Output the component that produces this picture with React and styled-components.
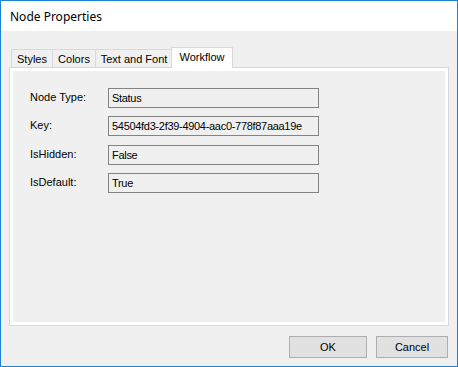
import React from "react";
import styled, { createGlobalStyle } from "styled-components";

const Global = createGlobalStyle`
  html, body { margin: 0; padding: 0; background: #ffffff; }
  * { box-sizing: border-box; }
`;

const Window = styled.div`
  width: 458px;
  height: 367px;
  border: 1px solid #1883d7;
  background: #f0f0f0;
  display: flex;
  flex-direction: column;
  font-family: "Liberation Sans", Arial, sans-serif;
  font-size: 11px;
  color: #000;
`;

const TitleBar = styled.div`
  height: 30px;
  background: #ffffff;
  display: flex;
  align-items: center;
  padding-left: 9px;
  font-family: "Noto Sans", "Liberation Sans", sans-serif;
  font-size: 12px;
  color: #000;
`;

const Body = styled.div`
  flex: 1;
  display: flex;
  flex-direction: column;
  padding: 16px 9px 0 8px;
`;

const TabRow = styled.div`
  display: flex;
  align-items: flex-end;
  height: 20px;
  padding-left: 2px;
  position: relative;
  z-index: 1;
`;

const Tab = styled.div`
  width: ${(p) => p.$w}px;
  height: ${(p) => (p.$active ? 21 : 18)}px;
  margin-left: ${(p) => (p.$active ? -2 : p.$first ? 0 : -1)}px;
  margin-bottom: ${(p) => (p.$active ? -1 : 0)}px;
  border: 1px solid #d9d9d9;
  border-bottom: none;
  background: ${(p) => (p.$active ? "#ffffff" : "#f0f0f0")};
  display: flex;
  align-items: ${(p) => (p.$active ? "flex-start" : "center")};
  justify-content: center;
  padding-top: ${(p) => (p.$active ? 3 : 0)}px;
  white-space: nowrap;
`;

const Panel = styled.div`
  width: 440px;
  height: 259px;
  border: 1px solid #d9d9d9;
  background: #ffffff;
  padding: 3px;
  display: flex;
`;

const Page = styled.div`
  flex: 1;
  background: #f0f0f0;
  padding: 17px 0 0 17px;
  display: flex;
  flex-direction: column;
  gap: 8.33px;
`;

const Row = styled.div`
  display: flex;
  align-items: center;
  height: 20px;
`;

const Label = styled.div`
  width: 78px;
  margin-top: -2px;
`;

const Field = styled.div`
  width: 211px;
  height: 20px;
  border: 1px solid #838383;
  background: #f0f0f0;
  display: flex;
  align-items: center;
  padding-left: 3px;
  letter-spacing: -0.3px;
  white-space: nowrap;
  overflow: hidden;
`;

const Footer = styled.div`
  display: flex;
  justify-content: flex-end;
  gap: 9px;
  margin-top: 10px;
`;

const Button = styled.button`
  width: ${(p) => p.$w}px;
  height: 22px;
  border: 1px solid #adadad;
  background: #e1e1e1;
  font-family: "Liberation Sans", Arial, sans-serif;
  font-size: 11px;
  color: #000;
  padding: 0;
`;

const fields = [
  ["Node Type:", "Status"],
  ["Key:", "54504fd3-2f39-4904-aac0-778f87aaa19e"],
  ["IsHidden:", "False"],
  ["IsDefault:", "True"],
];

const tabs = [
  ["Styles", 42],
  ["Colors", 44],
  ["Text and Font", 78],
  ["Workflow", 62, true],
];

export default function App() {
  return (
    <>
      <Global />
      <Window>
        <TitleBar>Node Properties</TitleBar>
        <Body>
          <TabRow>
            {tabs.map(([t, w, a], i) => (
              <Tab key={t} $w={w} $active={a} $first={i === 0}>
                {t}
              </Tab>
            ))}
          </TabRow>
          <Panel>
            <Page>
              {fields.map(([l, v]) => (
                <Row key={l}>
                  <Label>{l}</Label>
                  <Field>{v}</Field>
                </Row>
              ))}
            </Page>
          </Panel>
          <Footer>
            <Button $w={78}>OK</Button>
            <Button $w={72}>Cancel</Button>
          </Footer>
        </Body>
      </Window>
    </>
  );
}
